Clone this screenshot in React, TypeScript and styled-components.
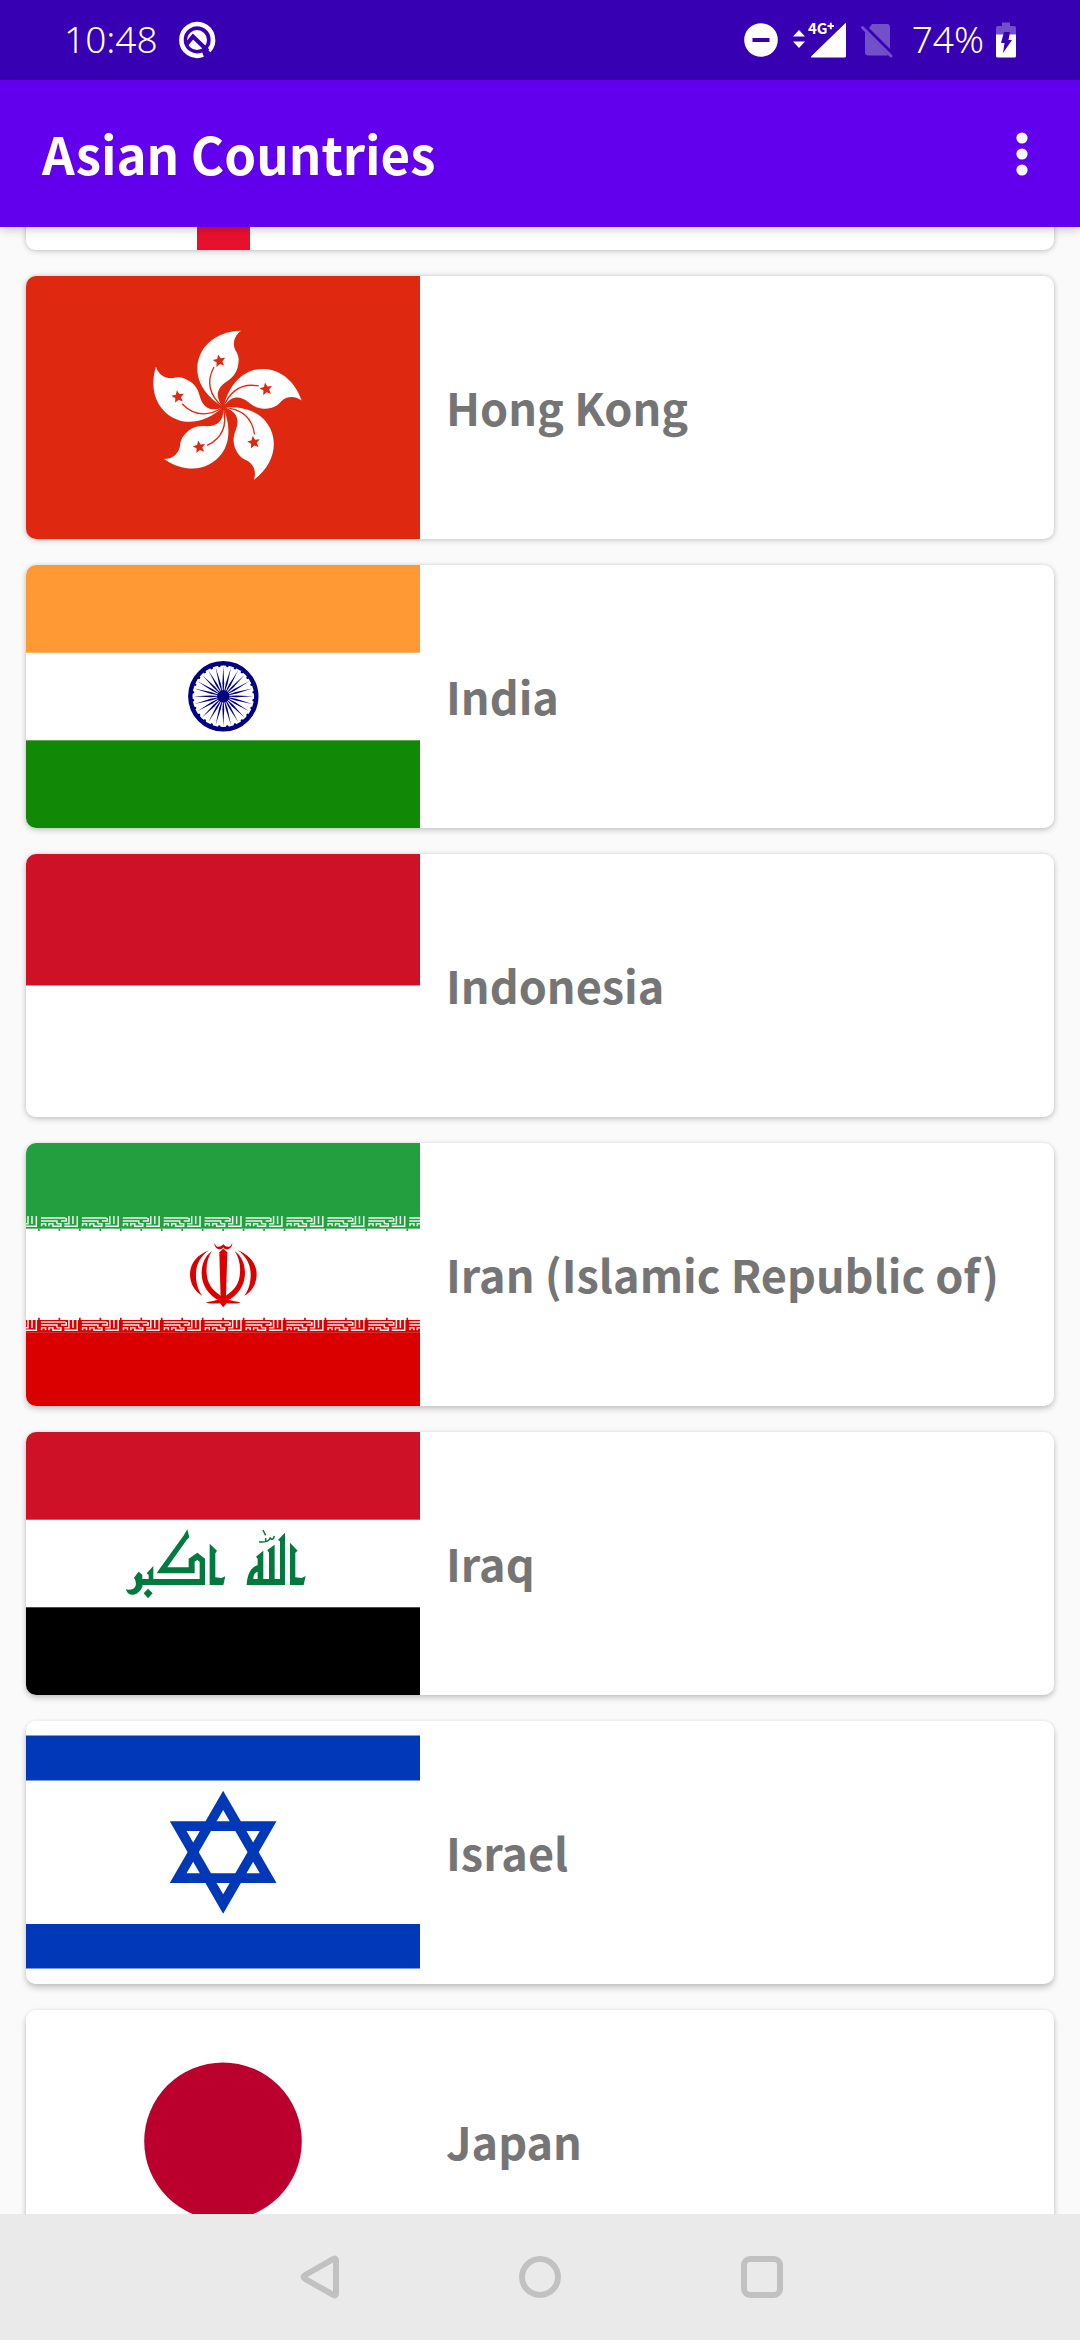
import React, { useLayoutEffect, useRef } from 'react';
import styled, { createGlobalStyle } from 'styled-components';

const GlobalStyle = createGlobalStyle`
  * { box-sizing: border-box; }
  html, body, #root { height: 100%; }
  body {
    margin: 0;
    background: #fafafa;
    font-family: "Noto Sans CJK SC", "Noto Sans", sans-serif;
  }
`;

const Screen = styled.div`
  display: flex;
  flex-direction: column;
  height: 100vh;
  overflow: hidden;
`;

const StatusBar = styled.div`
  display: flex;
  flex: none;
  align-items: center;
  justify-content: space-between;
  height: 80px;
  padding: 0 64px;
  background: #3700b3;
  color: #fff;
`;

const StatusText = styled.span`
  padding-bottom: 3px;
  font: 350 37px/50px "Noto Sans", sans-serif;
`;

const StatusGroup = styled.div<{ $gap: number }>`
  display: flex;
  align-items: center;
  gap: ${(p) => p.$gap}px;
`;

const BatteryGroup = styled(StatusGroup)`
  margin-left: 5px;
`;

const StatusIcon = styled.svg`
  display: block;
  flex: none;
  overflow: visible;
`;

const AppBar = styled.header`
  display: flex;
  flex: none;
  align-items: center;
  justify-content: space-between;
  height: 147px;
  padding: 0 34px 0 42px;
  background: #6200ee;
  color: #fff;
  position: relative;
  z-index: 1;
  box-shadow: 0 2px 10px rgba(0, 0, 0, 0.22);
`;

const Title = styled.h1`
  margin: 0;
  padding-bottom: 2px;
  font-size: 51px;
  font-weight: 700;
  line-height: 64px;
`;

const IconButton = styled.button`
  display: flex;
  align-items: center;
  justify-content: center;
  width: 48px;
  height: 96px;
  padding: 0;
  border: 0;
  background: none;
  color: inherit;
`;

const CountryList = styled.ul`
  display: flex;
  flex: 1;
  flex-direction: column;
  gap: 26px;
  min-height: 0;
  margin: 0;
  padding: 26px;
  list-style: none;
  overflow-y: auto;
  scrollbar-width: none;
`;

const CountryCard = styled.li<{ $drop: number }>`
  display: flex;
  flex: none;
  align-items: center;
  gap: 26px;
  border-radius: 10px;
  background: #fff;
  box-shadow: 0 0 4px rgba(0, 0, 0, 0.08), 0 ${(p) => p.$drop}px 6px rgba(0, 0, 0, 0.2);
`;

const Flag = styled.svg`
  display: block;
  flex: none;
  width: 394px;
  height: 263px;
  border-radius: 10px 0 0 10px;
`;

const CountryName = styled.span`
  color: #757575;
  font-size: 45px;
  font-weight: 700;
  line-height: 60px;
  padding-bottom: 2px;
`;

const NavBar = styled.nav`
  display: flex;
  flex: none;
  justify-content: center;
  height: 126px;
  background: #eaeaea;
`;

const NavButton = styled.button`
  display: flex;
  align-items: center;
  justify-content: center;
  width: 222px;
  padding: 0;
  border: 0;
  background: none;
  color: #c1c1c1;
`;

const FIFTHS = [0, 72, 144, 216, 288];
const STAR = FIFTHS.map((a) => {
  const at = (deg: number, r: number) =>
    `${(Math.sin((deg * Math.PI) / 180) * r).toFixed(2)},${(-Math.cos((deg * Math.PI) / 180) * r).toFixed(2)}`;
  return `${at(a, 20)} ${at(a + 36, 9)}`;
}).join(' ');

const Georgia = () => (
  <>
    <rect width="394" height="263" fill="#fff" />
    <path d="M171 0h53v263h-53zM0 105h394v53H0z" fill="#e8112d" />
  </>
);

const HongKong = () => (
  <>
    <rect width="394" height="263" fill="#de2910" />
    <g transform="translate(197.3 131.3) scale(.3333)">
      {FIFTHS.map((a) => (
        <g key={a} transform={`rotate(${a})`}>
          <path
            d="M-3-3C-40-25-78-65-78-115C-78-175-30-228 53-230C30-212 28-190 36-172C44-160 47-148 46-138C44-110 34-92 8-76C-18-58-26-35-3-3Z"
            fill="#fff"
          />
          <path d="M0 0C-45-38-50-80-28-121" fill="none" stroke="#de2910" strokeWidth="4" />
          <polygon points={STAR} transform="translate(-12 -139) rotate(-10)" fill="#de2910" />
        </g>
      ))}
    </g>
  </>
);

const SPOKES = Array.from({ length: 24 }, (_, i) => i * 15);

const India = () => (
  <>
    <rect width="394" height="263" fill="#fff" />
    <rect width="394" height="87.7" fill="#ff9933" />
    <rect y="175.3" width="394" height="87.7" fill="#128807" />
    <g transform="translate(197.3 131.3)" fill="#000080">
      <circle r="33" fill="none" stroke="#000080" strokeWidth="4.4" />
      <circle r="6.2" />
      {SPOKES.map((a) => (
        <g key={a} transform={`rotate(${a})`}>
          <path d="M0-30L-.9-13L-.3-4H.3L.9-13Z" />
          <circle r="1.3" cy="-30.6" transform="rotate(7.5)" />
        </g>
      ))}
    </g>
  </>
);

const Indonesia = () => (
  <>
    <rect width="394" height="263" fill="#fff" />
    <rect width="394" height="131.5" fill="#ce1126" />
  </>
);

const TILES = Array.from({ length: 11 }, (_, i) => i * 122.8 - 84);

const KuficBand = ({ y, color, notch }: { y: number; color: string; notch: number }) => (
  <g transform={`translate(0 ${y}) scale(.3333)`}>
    <rect width="1182" height="38" fill={color} />
    {TILES.map((x) => (
      <g key={x} transform={`translate(${x} 0)`}>
        <path
          d="M6 6H80M6 15H54V23M8 31V23H20V31M30 31V23H42V31H66V23H54M66 15H82V6M76 31H115V0M76 23H90V0M102 0V24"
          fill="none"
          stroke="#fff"
          strokeWidth="4.5"
          opacity=".9"
        />
        <path d={`M0 ${notch}v7M61.4 ${notch}v7`} stroke={color} strokeWidth="5" />
      </g>
    ))}
  </g>
);

const EmblemHalf = () => (
  <>
    <path d="M597 181C560 195 540 222 540 253C540 282 555 305 577 317C563 300 557 275 558 250C559 222 572 198 597 181Z" />
    <path d="M606 183C585 198 575 222 575 250C575 285 595 318 632 334L636 320C605 300 592 280 590 250C588 222 594 200 606 183Z" />
  </>
);

const Iran = () => (
  <>
    <rect width="394" height="263" fill="#fff" />
    <rect width="394" height="73.5" fill="#239f40" />
    <rect y="189.5" width="394" height="73.5" fill="#da0000" />
    <KuficBand y={73} color="#239f40" notch={38} />
    <KuficBand y={177} color="#da0000" notch={-7} />
    <g transform="translate(-16 47) scale(.3333)" fill="#da0000">
      <EmblemHalf />
      <g transform="translate(1280 0) scale(-1 1)">
        <EmblemHalf />
      </g>
      <path d="M628 187L640 176L652 187L648 324H632Z" />
      <path d="M587 338C605 332 622 332 630 326L640 312L650 326C658 332 675 332 692 338C675 341 660 341 650 340L640 352L630 340C618 341 605 341 587 338Z" />
      <path d="M613 159L617 166C622 173 632 172 640 163C648 172 658 173 663 166L667 159C667 170 660 178 650 178C645 178 641 175 640 172C639 175 635 178 630 178C620 178 613 170 613 159Z" />
    </g>
  </>
);

const Iraq = () => (
  <>
    <rect width="394" height="263" fill="#fff" />
    <rect width="394" height="87.7" fill="#ce1126" />
    <rect y="175.3" width="394" height="87.7" />
    <g transform="translate(84 78) scale(.3333)" fill="#007a3d" fillRule="evenodd">
      <path d="M540 98L563 122L556 128V202L575 204L587 198L581 225H540Z" />
      <path d="M525 68L504 90L510 94V207H494V104L472 120L477 128V207H460V122L438 140L443 146V166C425 170 412 190 410 225H525ZM430 207C430 195 435 187 443 185V207Z" />
      <path
        d="M447 95C458 97 478 97 481 82C483 91 491 89 493 78M467 93V84M459 60L467 76"
        fill="none"
        stroke="#007a3d"
        strokeWidth="4.5"
      />
      <path d="M299 101L321 122L316 130V202L334 204L346 199L340 225H299Z" />
      <path d="M232 58L222 75L148 178L140 190H254V155L262 150L269 155V207H130V168L110 190L116 195V207H97V194L86 185L72 203C80 215 80 230 70 236C62 240 54 240 48 238C52 256 70 258 82 250C92 242 97 234 98 225H285V146L262 128L236 146V172H172L230 90L238 82Z" />
      <path d="M114 236L128 250L114 265L101 250Z" />
    </g>
  </>
);

const Israel = () => (
  <>
    <rect width="394" height="263" fill="#fff" />
    <path d="M0 14.4h394v45.2H0zM0 203h394v44.6H0z" fill="#0038b8" />
    <g transform="translate(-16 -11) scale(.3333)" fill="none" stroke="#0038b8" strokeWidth="29">
      <path d="M639.5 271L774.5 504.5H504.5Z" />
      <path d="M639.5 582L774.5 348.5H504.5Z" />
    </g>
  </>
);

const Japan = () => (
  <>
    <rect width="394" height="263" fill="#fff" />
    <circle cx="197" cy="131.3" r="78.8" fill="#bc002d" />
  </>
);

const COUNTRIES = [
  { code: 'ge', Art: Georgia },
  { code: 'hk', name: 'Hong Kong', Art: HongKong },
  { code: 'in', name: 'India', Art: India },
  { code: 'id', name: 'Indonesia', Art: Indonesia },
  { code: 'ir', name: 'Iran (Islamic Republic of)', Art: Iran },
  { code: 'iq', name: 'Iraq', Art: Iraq },
  { code: 'il', name: 'Israel', Art: Israel },
  { code: 'jp', name: 'Japan', Art: Japan },
];

const INITIAL_SCROLL = 266;

export default function App() {
  const listRef = useRef<HTMLUListElement>(null);

  useLayoutEffect(() => {
    if (listRef.current) listRef.current.scrollTop = INITIAL_SCROLL;
  }, []);

  return (
    <Screen>
      <GlobalStyle />
      <StatusBar>
        <StatusGroup $gap={20}>
          <StatusText>10:48</StatusText>
          <StatusIcon width="38" height="38" viewBox="-19 -19 38 38" aria-hidden="true">
            <path d="M8.5 13.3A15.8 15.8 0 1 1 13.4 8.5" transform="rotate(10)" fill="none" stroke="#fff" strokeWidth="4.6" />
            <circle r="10" fill="#fff" />
            <path d="M-11 5L-4-3.5L11 11" fill="none" stroke="#3700b3" strokeWidth="4.2" />
          </StatusIcon>
        </StatusGroup>
        <StatusGroup $gap={14}>
          <StatusIcon width="36" height="36" viewBox="-18 -18 36 36" aria-hidden="true">
            <circle r="16.8" fill="#fff" />
            <rect x="-8.5" y="-2" width="17" height="4" fill="#3700b3" />
          </StatusIcon>
          <StatusIcon width="54" height="36" viewBox="0 0 54 36" aria-hidden="true">
            <path d="M6 8l6 6.5H0zM6 26l6-6.5H0z" fill="#fff" />
            <path d="M52 1.500q1-1 1 0V34q0 1.500-1.500 1.500H19q-2 0-.5-1.500z" fill="#fff" />
            <text x="15" y="12" fill="#fff" fontSize="15" fontWeight="700" fontFamily="Noto Sans CJK SC, sans-serif">
              4G
            </text>
            <path d="M34.500 4h6.500M37.800 .8v6.500" stroke="#fff" strokeWidth="2" />
          </StatusIcon>
          <StatusIcon width="32" height="36" viewBox="0 0 32 36" fill="#744fca" aria-hidden="true">
            <path d="M11 2h15q3 0 3 3v22L8 6zM4 9.500L27 33q-1 .5-2 .5H7q-3 0-3-3z" />
            <path d="M1.500 5.500L30 34" stroke="#744fca" strokeWidth="3" strokeLinecap="round" />
          </StatusIcon>
          <BatteryGroup $gap={12}>
            <StatusText>74%</StatusText>
            <StatusIcon width="20" height="36" viewBox="0 0 20 36" aria-hidden="true">
              <path d="M0 13V6q0-2 2-2h4V.5h8V4h4q2 0 2 2v7z" fill="#744fca" />
              <path d="M0 12.500h20V34q0 1.500-1.500 1.500h-17Q0 35.500 0 34z" fill="#fff" />
              <path d="M8 10h6l-1.500 8H16L7 31l1.500-10H5z" fill="#3700b3" />
            </StatusIcon>
          </BatteryGroup>
        </StatusGroup>
      </StatusBar>

      <AppBar>
        <Title>Asian Countries</Title>
        <IconButton type="button" aria-label="More options">
          <svg width="12" height="44" viewBox="0 0 12 44" fill="currentColor" aria-hidden="true">
            <circle cx="6" cy="6" r="5.6" />
            <circle cx="6" cy="22" r="5.6" />
            <circle cx="6" cy="38" r="5.6" />
          </svg>
        </IconButton>
      </AppBar>

      <CountryList ref={listRef}>
        {COUNTRIES.map(({ code, name, Art }, i) => (
          <CountryCard key={code} $drop={1 + Math.floor(i / 2)}>
            <Flag viewBox="0 0 394 263" aria-hidden="true">
              <Art />
            </Flag>
            {name && <CountryName>{name}</CountryName>}
          </CountryCard>
        ))}
      </CountryList>

      <NavBar>
        <NavButton type="button" aria-label="Back">
          <svg width="48" height="48" viewBox="0 0 48 48" fill="none" stroke="currentColor" strokeWidth="6" aria-hidden="true">
            <path d="M11.2 22L39.5 6Q42 4.800 42 7.500V40.500Q42 43.200 39.500 42L11.200 26Q8 24 11.200 22Z" />
          </svg>
        </NavButton>
        <NavButton type="button" aria-label="Home">
          <svg width="48" height="48" viewBox="0 0 48 48" fill="none" stroke="currentColor" strokeWidth="6" aria-hidden="true">
            <circle cx="24" cy="24" r="18" />
          </svg>
        </NavButton>
        <NavButton type="button" aria-label="Recent apps">
          <svg width="48" height="48" viewBox="0 0 48 48" fill="none" stroke="currentColor" strokeWidth="6" aria-hidden="true">
            <rect x="6" y="6" width="36" height="36" rx="6" />
          </svg>
        </NavButton>
      </NavBar>
    </Screen>
  );
}
